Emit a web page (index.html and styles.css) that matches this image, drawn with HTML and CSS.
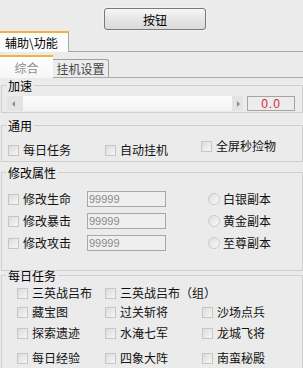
FILE: index.html
```html
<!DOCTYPE html>
<html lang="zh">
<head>
  <meta charset="UTF-8">
  <title>辅助</title>
  <link rel="stylesheet" href="styles.css">
</head>
<body>
  <div class="toolbar">
    <button class="btn" type="button">按钮</button>
  </div>

  <div class="tabs outer">
    <div class="tab active">辅助\功能</div>
  </div>

  <div class="tabs inner">
    <div class="tab active">综合</div>
    <div class="tab">挂机设置</div>
  </div>

  <fieldset class="group speed">
    <legend>加速</legend>
    <div class="speed-row">
      <div class="slider">
        <span class="cap left"><i class="arrow-left"></i></span>
        <span class="track"></span>
        <span class="cap right"><i class="arrow-right"></i></span>
      </div>
      <div class="value">0.0</div>
    </div>
  </fieldset>

  <fieldset class="group general">
    <legend>通用</legend>
    <div class="general-row">
      <label class="check"><span class="box"></span>每日任务</label>
      <label class="check"><span class="box"></span>自动挂机</label>
      <label class="check raised"><span class="box"></span>全屏秒捡物</label>
    </div>
  </fieldset>

  <fieldset class="group attrs">
    <legend>修改属性</legend>
    <div class="attr-row">
      <label class="check"><span class="box"></span>修改生命</label>
      <input class="num" type="text" value="99999">
      <label class="radio-item"><span class="radio"></span>白银副本</label>
    </div>
    <div class="attr-row">
      <label class="check"><span class="box"></span>修改暴击</label>
      <input class="num" type="text" value="99999">
      <label class="radio-item"><span class="radio"></span>黄金副本</label>
    </div>
    <div class="attr-row">
      <label class="check"><span class="box"></span>修改攻击</label>
      <input class="num" type="text" value="99999">
      <label class="radio-item"><span class="radio"></span>至尊副本</label>
    </div>
  </fieldset>

  <fieldset class="group daily">
    <legend>每日任务</legend>
    <div class="task-grid">
      <label class="check"><span class="box"></span>三英战吕布</label>
      <label class="check wide"><span class="box"></span>三英战吕布（组）</label>
      <label class="check"><span class="box"></span>藏宝图</label>
      <label class="check"><span class="box"></span>过关斩将</label>
      <label class="check"><span class="box"></span>沙场点兵</label>
      <label class="check"><span class="box"></span>探索遗迹</label>
      <label class="check"><span class="box"></span>水淹七军</label>
      <label class="check"><span class="box"></span>龙城飞将</label>
      <label class="check"><span class="box"></span>每日经验</label>
      <label class="check"><span class="box"></span>四象大阵</label>
      <label class="check"><span class="box"></span>南蛮秘殿</label>
    </div>
  </fieldset>
</body>
</html>
```

FILE: styles.css
```css
body {
  margin: 0;
  background: #ebebeb;
  font-family: "Noto Sans CJK SC", sans-serif;
  font-size: 12px;
  color: #111;
  overflow: hidden;
}
.toolbar {
  height: 23px;
  padding-top: 8px;
}
.btn {
  display: block;
  margin: 0 0 0 104px;
  width: 102px;
  height: 22px;
  padding: 0;
  border: 1px solid #7a7a7a;
  border-radius: 3px;
  background: linear-gradient(#f7f7f7, #e6e6e6 50%, #dadada);
  box-shadow: 0 0 2px #fff;
  font-family: inherit;
  font-size: 12px;
  color: #000;
}

/* tabs */
.tabs {
  display: flex;
  align-items: flex-end;
}
.tabs.outer {
  height: 20px;
  border-bottom: 1px solid #a8a8a8;
}
.tabs.outer .tab.active {
  width: 63px;
  height: 19px;
  margin-bottom: -1px;
  padding-left: 5px;
  background: #fcfcfc;
  border-top: 2px solid #f0b43c;
  border-right: 1px solid #a8a8a8;
  line-height: 19px;
  color: #000;
}
.tabs.inner {
  height: 25px;
  border-bottom: 1px solid #a8a8a8;
}
.tabs.inner .tab {
  text-align: center;
}
.tabs.inner .tab.active {
  width: 53px;
  height: 21px;
  margin-bottom: -1px;
  background: linear-gradient(#ffffff, #f6f6f6);
  border-top: 2px solid #f0b43c;
  line-height: 22px;
  color: #8e8e8e;
}
.tabs.inner .tab:not(.active) {
  width: 55px;
  height: 17px;
  border-top: 1px solid #a0a0a0;
  border-right: 1px solid #a0a0a0;
  border-top-right-radius: 3px;
  background: #ececec;
  line-height: 18px;
  color: #444;
}

/* group boxes */
.group {
  margin: 0 0 0 1px;
  padding: 0;
  border: 1px solid #cfcfcf;
  min-width: 0;
}
.group legend {
  margin-left: 4px;
  padding: 2px 2px 0;
  line-height: 12px;
  color: #000;
}
.speed {
  padding: 4px 0 1px;
}
.general {
  margin-top: 5px;
  padding: 10px 0 3px;
}
.attrs {
  margin-top: 3px;
  padding: 12px 0 19px;
}
.daily {
  margin-top: -3px;
  padding: 3px 0 20px;
}

/* speed slider */
.speed-row {
  display: flex;
  gap: 4px;
  padding-left: 5px;
}
.slider {
  display: flex;
  width: 236px;
  height: 15px;
}
.cap {
  display: flex;
  align-items: center;
  background: #e4e4e4;
}
.cap.left {
  width: 11px;
  padding-left: 5px;
}
.cap.right {
  width: 6px;
  padding-left: 5px;
}
.track {
  flex: 1;
  background: linear-gradient(#fdfdfd, #f3f3f3);
}
.arrow-left {
  border-top: 3px solid transparent;
  border-bottom: 3px solid transparent;
  border-right: 3px solid #8c8c8c;
}
.arrow-right {
  border-top: 3px solid transparent;
  border-bottom: 3px solid transparent;
  border-left: 3px solid #8c8c8c;
}
.value {
  width: 46px;
  height: 13px;
  border: 1px solid #a4a4a4;
  background: #ececec;
  text-align: center;
  font-family: "Liberation Sans", sans-serif;
  font-size: 12px;
  line-height: 14px;
  letter-spacing: 1px;
  color: #d0253a;
}

/* checkboxes and radios */
.check, .radio-item {
  display: flex;
  align-items: center;
  gap: 4px;
  height: 16px;
  line-height: 16px;
  white-space: nowrap;
}
.radio-item {
  gap: 3px;
}
.box {
  flex: none;
  width: 9px;
  height: 9px;
  border: 1px solid #c6c6c6;
  background: linear-gradient(135deg, #dcdcdc, #f6f6f6);
}
.radio {
  flex: none;
  width: 10px;
  height: 10px;
  border: 1px solid #cbcbcb;
  border-radius: 50%;
  background: linear-gradient(135deg, #dedede, #fafafa);
}

.general-row {
  display: grid;
  grid-template-columns: 97px 96px 1fr;
  padding-left: 6px;
}
.general-row .raised {
  margin-top: -4px;
}

.attr-row {
  display: grid;
  grid-template-columns: 79px 121px 1fr;
  padding-left: 6px;
  margin-bottom: 6px;
}
.attr-row:last-child {
  margin-bottom: 0;
}
.num {
  box-sizing: border-box;
  width: 79px;
  height: 16px;
  margin: 0;
  padding: 0 0 0 1px;
  border: 1px solid #a8a8a8;
  background: #efefef;
  font-family: "Liberation Sans", sans-serif;
  font-size: 11px;
  color: #8a8a8a;
}

.task-grid {
  display: grid;
  grid-template-columns: 88px 97px 1fr;
  grid-template-rows: 19px 21px 25px 16px;
  align-items: start;
  padding-left: 15px;
}
.task-grid .wide {
  grid-column: span 2;
}
```
